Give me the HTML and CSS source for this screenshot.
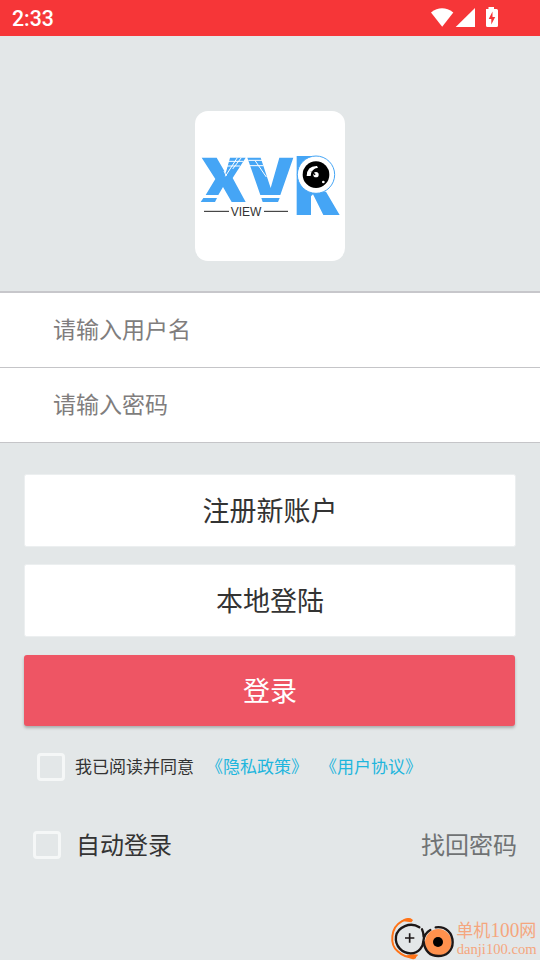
FILE: index.html
```html
<!DOCTYPE html>
<html lang="zh-CN">
<head>
<meta charset="utf-8">
<title>XVR View</title>
<link rel="stylesheet" href="styles.css">
</head>
<body>
<header class="status">
  <span class="clock">2:33</span>
  <svg class="status-icons" width="70" height="24" viewBox="0 0 70 24">
    <path d="M1 6.400Q12-1.800 23.300 6.400L12.200 20.800Z"/>
    <path d="M45 1.900V21H25.700Z"/>
    <path fill-rule="evenodd" d="M56 3H58.500V1H64V3H66.500Q68 3 68 4.500V19.500Q68 21 66.500 21H57.500Q56 21 56 19.500ZM62.500 5.500L58.700 13H61.300V18.500L65.200 11H62.500Z"/>
  </svg>
</header>
<main>
  <div class="brand">
    <svg class="logo" viewBox="15 18 450 450">
      <g class="blue">
        <path d="M35 158H80L107 205L120 158H167L128 219L167 291H125L99 246L85 270H47L76 222Z"/>
        <path d="M40 279H81L75 291H32Z"/>
        <path d="M172 158H212L242 249L268 158H310L271 270H211Z"/>
        <path d="M214 279H269L264 291H218Z"/>
        <path d="M320 153H378V260L408 260L449 330H400L369 268L363 274V330H320Z"/>
      </g>
      <g class="cuts">
        <path d="M110 169H160M105 183H150M175 166H216M180 182H220"/>
        <path d="M142 158L106 214M154 158L128 192M102 198L109 213M196 168L229 216"/>
      </g>
      <circle class="rim" cx="378" cy="209" r="56"/>
      <circle cx="378" cy="209" r="40"/>
      <path class="shine" d="M350 213Q351 182 381 183L384 188Q364 190 362 213Z"/>
      <circle class="shine" cx="378" cy="209" r="8"/>
      <path d="M360 197L377 207L374 211Z"/>
      <circle class="shine" cx="400" cy="231" r="4"/>
      <path class="rule" d="M42 319H117M222 319H294"/>
      <text x="122" y="333" textLength="92">VIEW</text>
    </svg>
  </div>
  <div class="fields">
    <div class="field">请输入用户名</div>
    <div class="field">请输入密码</div>
  </div>
  <div class="actions">
    <div class="btn">注册新账户</div>
    <div class="btn">本地登陆</div>
    <div class="btn primary">登录</div>
  </div>
  <div class="agree">
    <span class="box"></span>
    <span class="agree-text">我已阅读并同意</span>
    <a>《隐私政策》</a>
    <a>《用户协议》</a>
  </div>
  <div class="auto">
    <span class="box"></span>
    <span class="auto-text">自动登录</span>
    <span class="forgot">找回密码</span>
  </div>
</main>
<svg class="mark" width="160" height="55" viewBox="0 0 480 165">
  <path class="arc" d="M96 46Q83 37 64 50C32 68 28 118 53 139Q77 161 108 157"/>
  <path class="tip" d="M64 48Q83 33 99 46L94 52ZM78 152Q98 145 115 149L103 162Q91 165 78 152Z"/>
  <path class="ring" d="M118 67C91 49 53 66 48 94C44 124 68 145 92 145C118 144 130 123 130 109C131 92 142 80 151 75M126 73Q130 81 131 96"/>
  <circle class="disc" cx="175" cy="112" r="40"/>
  <path class="ring" d="M167 67C198 63 218 84 218 112C218 139 197 153 175 153C150 153 135 137 131 111"/>
  <circle cx="174" cy="111" r="15"/>
  <path class="plus" d="M75 99H103M89 85V113"/>
  <text class="name" x="229" y="96" textLength="240" lengthAdjust="spacingAndGlyphs">单机<tspan class="digits">100</tspan>网</text>
  <text class="site" x="230" y="146" textLength="240" lengthAdjust="spacingAndGlyphs">danji100.com</text>
</svg>
</body>
</html>
```
FILE: styles.css
```css
* { box-sizing: border-box; }
body {
  position: relative;
  margin: 0;
  width: 540px;
  height: 960px;
  overflow: hidden;
  background: #e3e7e8;
  color: #333;
  font-family: "Noto Sans CJK SC", sans-serif;
  font-weight: 400;
}
.status {
  display: flex;
  justify-content: space-between;
  height: 36px;
  padding: 6px 40px 0 12px;
  background: #f63638;
  color: #fff;
}
.clock { font: 500 21.3px/26px Roboto, sans-serif; }
.status-icons { fill: #fff; }
.brand { display: flex; justify-content: center; padding: 75px 0 30px; }
.logo { width: 150px; height: 150px; background: #fff; border-radius: 13px; }
.blue { fill: #45a5f5; }
.cuts { fill: none; stroke: #fff; stroke-width: 3; }
.rim { fill: #fff; stroke: #45a5f5; stroke-width: 3; }
.shine { fill: #fff; }
.rule { stroke: #222; stroke-width: 3; }
.logo text { font: 36px "Liberation Sans", sans-serif; fill: #333; }
.fields { border-top: 2px solid #c7c7cb; background: #fff; }
.field {
  height: 75px;
  padding-left: 53px;
  border-bottom: 1px solid #c5c5c8;
  font-size: 23px;
  line-height: 70px;
  color: #807d7d;
}
.actions { display: flex; flex-direction: column; gap: 17px; padding: 31px 24px 0; }
.btn {
  height: 73px;
  border: 1px solid #eceff0;
  border-radius: 2px;
  background: #fff;
  background-clip: padding-box;
  font-size: 27px;
  line-height: 69px;
  text-align: center;
}
.primary {
  height: 71px;
  margin: 1px 1px 0 0;
  padding-left: 1px;
  border: 0;
  border-radius: 3px;
  background: #ee5564;
  color: #fff;
  box-shadow: 0 2px 3px rgba(0, 0, 0, .25);
}
.box { width: 28px; height: 28px; border: 3px solid #f5f7f7; border-radius: 4px; }
.agree { display: flex; align-items: center; height: 28px; margin-top: 27px; padding-left: 37px; font-size: 17px; line-height: 26px; }
.agree-text { margin: 0 12px 0 10px; }
.agree a { margin-right: 12px; color: #1fb6dd; }
.agree-text, .agree a { padding-bottom: 3px; }
.auto { display: flex; align-items: center; height: 28px; margin-top: 50px; padding: 0 23px 0 33px; font-size: 24px; }
.auto-text { margin-left: 15px; }
.auto-text, .forgot { padding-bottom: 4px; }
.forgot { margin-left: auto; color: #707374; }
.mark { position: absolute; left: 380px; top: 905px; }
.arc { fill: none; stroke: #ff7317; stroke-width: 6; }
.tip { fill: #ff7317; }
.ring { fill: none; stroke: #1c1717; stroke-width: 7; stroke-linecap: round; }
.disc { fill: #ff914d; }
.plus { stroke: #1c1717; stroke-width: 5; }
.name { font: 400 53px "Noto Sans CJK SC", sans-serif; fill: #f5a67e; }
.digits { font-family: "Liberation Serif", serif; font-size: 60px; }
.site { font: 400 44px "Liberation Serif", serif; fill: #f5a67e; }
```
